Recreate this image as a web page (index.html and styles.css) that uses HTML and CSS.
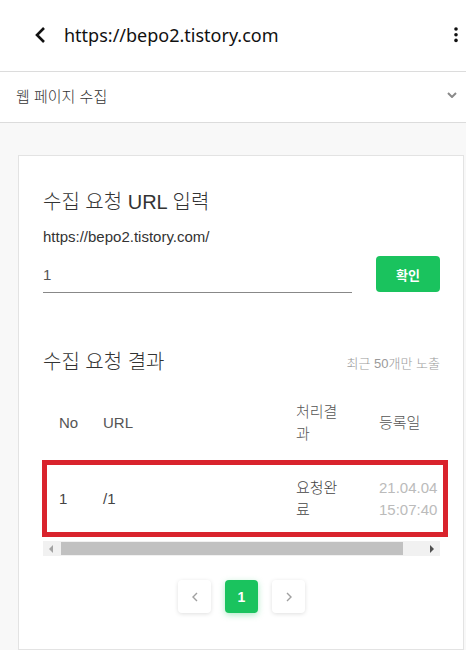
FILE: index.html
```html
<!DOCTYPE html>
<html lang="ko">
<head>
  <meta charset="UTF-8" />
  <meta name="viewport" content="width=device-width, initial-scale=1" />
  <title>웹 페이지 수집</title>
  <link rel="stylesheet" href="styles.css">
</head>
<body>
  <header class="topbar">
    <button class="icon-btn back" aria-label="뒤로">
      <svg width="12" height="18" viewBox="0 0 12 18"><path d="M10 2 L3 9 L10 16" fill="none" stroke="#111" stroke-width="2.6" stroke-linejoin="miter"/></svg>
    </button>
    <h1 class="site-name">https://bepo2.tistory.com</h1>
    <button class="icon-btn more" aria-label="메뉴">
      <svg width="4" height="16" viewBox="0 0 4 16"><circle cx="2" cy="2" r="1.8" fill="#111"/><circle cx="2" cy="7.7" r="1.8" fill="#111"/><circle cx="2" cy="13.4" r="1.8" fill="#111"/></svg>
    </button>
  </header>

  <div class="menu-row">
    <span>웹 페이지 수집</span>
    <svg width="10" height="6" viewBox="0 0 10 6"><path d="M1 1 L5 5 L9 1" fill="none" stroke="#8a8a8a" stroke-width="2"/></svg>
  </div>

  <main class="page">
    <section class="card">
      <h2 class="card-title">수집 요청 URL 입력</h2>
      <p class="base-url">https://bepo2.tistory.com/</p>
      <div class="url-form">
        <input class="url-input" type="text" value="1" />
        <button class="btn-ok">확인</button>
      </div>

      <div class="result-head">
        <h2 class="card-title">수집 요청 결과</h2>
        <span class="note">최근 50개만 노출</span>
      </div>

      <div class="table-wrap">
        <div class="table-scroll">
          <table class="result-table">
            <colgroup>
              <col class="c-no"><col class="c-url"><col class="c-state"><col class="c-date">
            </colgroup>
            <thead>
              <tr><th>No</th><th>URL</th><th>처리결과</th><th>등록일</th></tr>
            </thead>
            <tbody>
              <tr>
                <td>1</td>
                <td>/1</td>
                <td>요청완료</td>
                <td class="date">21.04.04<br>15:07:40</td>
              </tr>
            </tbody>
          </table>
        </div>
        <div class="fake-scroll">
          <span class="arrow left"></span>
          <span class="thumb"></span>
          <span class="arrow right"></span>
        </div>
        <div class="highlight"></div>
      </div>

      <nav class="pager">
        <button class="page-btn">
          <svg width="6" height="10" viewBox="0 0 6 10"><path d="M5 1 L1 5 L5 9" fill="none" stroke="#a0a0a0" stroke-width="1.4"/></svg>
        </button>
        <button class="page-btn current">1</button>
        <button class="page-btn">
          <svg width="6" height="10" viewBox="0 0 6 10"><path d="M1 1 L5 5 L1 9" fill="none" stroke="#a0a0a0" stroke-width="1.4"/></svg>
        </button>
      </nav>
    </section>
  </main>
</body>
</html>
```

FILE: styles.css
```css
body {
  margin: 0;
  background-color: #fff;
  font-family: "Liberation Sans", "Noto Sans CJK KR", sans-serif;
  font-weight: 300;
  color: #333;
}

button {
  font-family: inherit;
}

.topbar {
  height: 72px;
  box-sizing: border-box;
  border-bottom: 1px solid #dcdcdc;
  display: flex;
  align-items: center;
  padding: 0 8px 1px 34px;
}

.icon-btn {
  background: none;
  border: none;
  padding: 0;
  display: flex;
  align-items: center;
}

.site-name {
  flex: 1;
  margin: 0 0 0 18px;
  font-family: "Noto Sans", "Noto Sans CJK KR", sans-serif;
  font-size: 18px;
  font-weight: 400;
  color: #111;
  line-height: 24px;
}

.menu-row {
  height: 51px;
  box-sizing: border-box;
  border-bottom: 1px solid #dcdcdc;
  display: flex;
  align-items: center;
  justify-content: space-between;
  padding: 0 9px 4px 16px;
  font-family: "Noto Sans CJK KR", sans-serif;
  font-size: 15px;
  color: #333;
}

.page {
  background-color: #f8f8f8;
  padding: 32px 2px 0 18px;
}

.card {
  background-color: #fff;
  border: 1px solid #e3e3e3;
  padding: 31px 23px 36px 24px;
}

.card-title {
  margin: 0;
  font-family: "Liberation Sans", "Noto Sans CJK KR", sans-serif;
  font-size: 20px;
  font-weight: 300;
  line-height: 30px;
  color: #333;
}

.base-url {
  margin: 10px 0 0;
  font-size: 15px;
  line-height: 20px;
  color: #333;
}

.url-form {
  margin-top: 9px;
  display: flex;
  justify-content: space-between;
  align-items: flex-start;
}

.url-input {
  width: 309px;
  height: 37px;
  box-sizing: border-box;
  border: none;
  border-bottom: 1px solid #888;
  padding: 0;
  font-family: inherit;
  font-size: 15px;
  color: #555;
  outline: none;
}

.btn-ok {
  width: 64px;
  height: 36px;
  border: none;
  border-radius: 4px;
  background-color: #1ac35e;
  color: #fff;
  font-family: "Noto Sans CJK KR", sans-serif;
  font-size: 13px;
  font-weight: bold;
}

.result-head {
  margin-top: 54px;
  display: flex;
  justify-content: space-between;
  align-items: center;
}

.note {
  font-size: 13px;
  color: #9a9a9a;
}

.table-wrap {
  position: relative;
  margin-top: 12px;
}

.table-scroll {
  overflow: hidden;
}

.result-table {
  table-layout: fixed;
  width: 411px;
  border-collapse: collapse;
  font-size: 15px;
  line-height: 22px;
  color: #555;
}

.c-no { width: 44px; }
.c-url { width: 193px; }
.c-state { width: 83px; }
.c-date { width: 91px; }

.result-table th,
.result-table td {
  padding: 0 16px;
  text-align: left;
  font-weight: 300;
  vertical-align: middle;
}

.result-table thead tr {
  height: 68px;
}

.result-table tbody tr {
  height: 84px;
}

.result-table td {
  color: #444;
}

.result-table td.date {
  color: #bbb;
}

.fake-scroll {
  height: 15px;
  background-color: #f1f1f1;
  display: flex;
  align-items: center;
}

.fake-scroll .thumb {
  height: 13px;
  margin-left: 8px;
  width: 342px;
  background-color: #c1c1c1;
}

.fake-scroll .arrow {
  width: 0;
  height: 0;
  border-top: 4px solid transparent;
  border-bottom: 4px solid transparent;
}

.fake-scroll .arrow.left {
  margin-left: 6px;
  border-right: 4px solid #a3a3a3;
}

.fake-scroll .arrow.right {
  margin-left: auto;
  margin-right: 6px;
  border-left: 4px solid #505050;
}

.highlight {
  position: absolute;
  top: 71px;
  left: -1px;
  width: 406px;
  height: 77px;
  box-sizing: border-box;
  border: 5px solid #d9232d;
}

.pager {
  margin-top: 24px;
  display: flex;
  justify-content: center;
  gap: 14px;
}

.page-btn {
  width: 33px;
  height: 33px;
  border: none;
  border-radius: 4px;
  background-color: #fff;
  box-shadow: 0 1px 4px rgba(0, 0, 0, 0.13);
  display: flex;
  align-items: center;
  justify-content: center;
  padding: 0;
}

.page-btn.current {
  background-color: #1ac35e;
  color: #fff;
  font-size: 14px;
  font-weight: bold;
  box-shadow: 0 2px 6px rgba(26, 195, 94, 0.35);
}
```
